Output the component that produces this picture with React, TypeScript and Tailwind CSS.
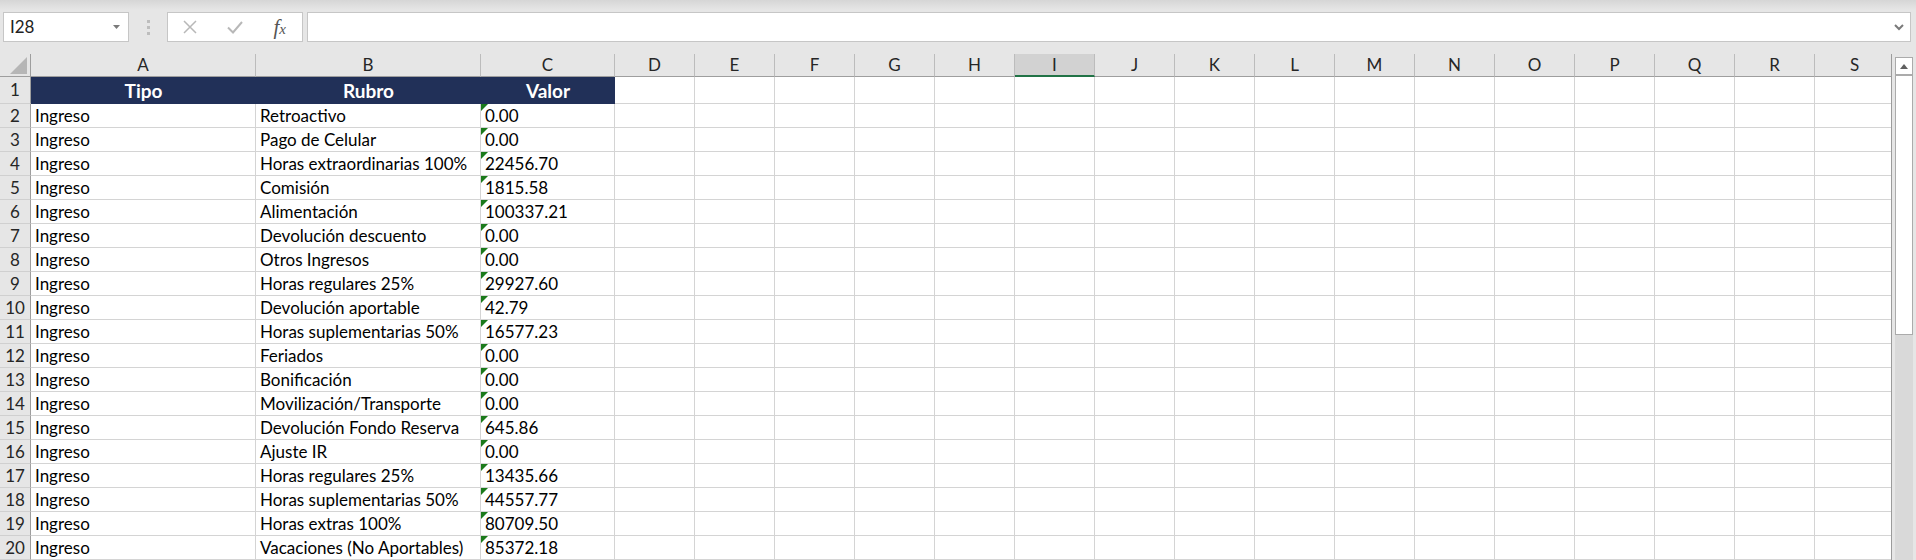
import React from 'react';

const rows: [string, string][] = [
  ['Retroactivo', '0.00'],
  ['Pago de Celular', '0.00'],
  ['Horas extraordinarias 100%', '22456.70'],
  ['Comisión', '1815.58'],
  ['Alimentación', '100337.21'],
  ['Devolución descuento', '0.00'],
  ['Otros Ingresos', '0.00'],
  ['Horas regulares 25%', '29927.60'],
  ['Devolución aportable', '42.79'],
  ['Horas suplementarias 50%', '16577.23'],
  ['Feriados', '0.00'],
  ['Bonificación', '0.00'],
  ['Movilización/Transporte', '0.00'],
  ['Devolución Fondo Reserva', '645.86'],
  ['Ajuste IR', '0.00'],
  ['Horas regulares 25%', '13435.66'],
  ['Horas suplementarias 50%', '44557.77'],
  ['Horas extras 100%', '80709.50'],
  ['Vacaciones (No Aportables)', '85372.18'],
];

const extraCols = ['D', 'E', 'F', 'G', 'H', 'I', 'J', 'K', 'L', 'M', 'N', 'O', 'P', 'Q', 'R', 'S'];

// number stored as text marker
function GreenFlag() {
  return (
    <svg className="absolute left-0 top-0" width="7" height="7" viewBox="0 0 7 7">
      <path d="M0 0H7L0 7Z" fill="#1b7a1b" />
    </svg>
  );
}

function Toolbar() {
  return (
    <div className="h-[54px] flex flex-col">
      <div className="h-[10px] bg-linear-to-b from-[#d6d6d6] to-[#e6e6e6]" />
      <div className="mt-[2px] flex items-center pl-[3px] pr-[5px]">
        <div className="w-[126px] h-[30px] bg-white border border-[#c6c6c6] flex items-center justify-between pl-[6px] pr-[8px]">
          <span className="text-[17px] text-[#222]">I28</span>
          <svg width="7" height="4" viewBox="0 0 7 4">
            <path d="M0 0H7L3.5 4Z" fill="#7a7a7a" />
          </svg>
        </div>
        <div className="w-[38px] flex flex-col items-center gap-[3px]">
          <span className="w-[3px] h-[3px] bg-[#bdbdbd]" />
          <span className="w-[3px] h-[3px] bg-[#bdbdbd]" />
          <span className="w-[3px] h-[3px] bg-[#bdbdbd]" />
        </div>
        <div className="w-[136px] h-[30px] bg-white border border-[#c6c6c6] flex items-center">
          <div className="w-[45px] flex justify-center">
            <svg width="14" height="14" viewBox="0 0 14 14">
              <path d="M1 1L13 13M13 1L1 13" stroke="#b8b8b8" strokeWidth="1.5" />
            </svg>
          </div>
          <div className="w-[45px] flex justify-center">
            <svg width="16" height="13" viewBox="0 0 16 13">
              <path d="M1 6.5L6 11.5L15 1" stroke="#b8b8b8" strokeWidth="2" fill="none" />
            </svg>
          </div>
          <div className="w-[45px] flex justify-center">
            <span className="italic text-[21px] text-[#555] font-['Liberation_Serif',serif] leading-none">
              f<span className="text-[15px]">x</span>
            </span>
          </div>
        </div>
        <div className="ml-[4px] flex-1 h-[30px] bg-white border border-[#c6c6c6] flex items-center justify-end pr-[6px]">
          <svg width="10" height="7" viewBox="0 0 10 7">
            <path d="M1 1L5 5L9 1" stroke="#7a7a7a" strokeWidth="2" fill="none" />
          </svg>
        </div>
      </div>
    </div>
  );
}

function Scrollbar() {
  return (
    <div className="w-[24px] flex flex-col pt-[3px] pl-[3px] pr-[3px]">
      <div className="h-[18px] bg-white border border-[#ababab] flex items-center justify-center">
        <svg width="8" height="5" viewBox="0 0 8 5">
          <path d="M0 5H8L4 0Z" fill="#606060" />
        </svg>
      </div>
      <div className="flex-1 bg-[#d9d9d9]">
        <div className="h-[260px] bg-white border border-[#ababab]" />
      </div>
    </div>
  );
}

export default function App() {
  const headCell = 'h-[23px] leading-[22px] text-center text-[#262626] bg-[#e6e6e6] border-r border-[#bcbcbc] border-b border-b-[#9e9e9e]';
  const rowNum = 'h-[24px] leading-[23px] text-center text-[#262626] bg-[#e6e6e6] border-r border-r-[#9e9e9e] border-b border-[#d0d0d0]';
  const cell = 'relative h-[24px] leading-[23px] px-[4px] whitespace-nowrap overflow-hidden border-r border-b border-[#d4d4d4] bg-white';

  return (
    <div className="w-[1916px] h-[560px] overflow-hidden bg-[#e6e6e6] text-[17px] text-black font-['Lato',sans-serif]">
      <Toolbar />
      <div className="flex">
        <div className="w-[1892px] overflow-hidden border-r border-[#9b9b9b]">
          <div className="grid grid-cols-[31px_225px_225px_134px_repeat(16,80px)]">
            {/* column headers */}
            <div className="relative h-[23px] bg-[#e6e6e6] border-r border-r-[#9e9e9e] border-b border-b-[#9e9e9e]">
              <svg className="absolute right-[3px] bottom-[2px]" width="17" height="17" viewBox="0 0 17 17">
                <path d="M17 0V17H0Z" fill="#b6b6b6" />
              </svg>
            </div>
            {['A', 'B', 'C', ...extraCols].map(c =>
              c === 'I' ? (
                <div key={c} className="h-[23px] leading-[21px] text-center text-[#262626] bg-[#d2d2d2] border-r border-[#bcbcbc] border-b-2 border-b-[#217346]">
                  {c}
                </div>
              ) : (
                <div key={c} className={headCell}>{c}</div>
              )
            )}

            {/* row 1 */}
            <div className="h-[27px] leading-[26px] text-center text-[#262626] bg-[#e6e6e6] border-r border-r-[#9e9e9e] border-b border-[#d0d0d0]">1</div>
            {['Tipo', 'Rubro', 'Valor'].map(h => (
              <div key={h} className="h-[27px] leading-[27px] text-center text-[19px] font-bold text-white bg-[#213058]">{h}</div>
            ))}
            {extraCols.map(c => (
              <div key={c} className="h-[27px] border-r border-b border-[#d4d4d4] bg-white" />
            ))}

            {/* data rows */}
            {rows.map(([rubro, valor], i) => (
              <React.Fragment key={i}>
                <div className={rowNum}>{i + 2}</div>
                <div className={cell}>Ingreso</div>
                <div className={cell}>{rubro}</div>
                <div className={cell}>
                  <GreenFlag />
                  {valor}
                </div>
                {extraCols.map(c => (
                  <div key={c} className={cell} />
                ))}
              </React.Fragment>
            ))}
          </div>
        </div>
        <Scrollbar />
      </div>
    </div>
  );
}
